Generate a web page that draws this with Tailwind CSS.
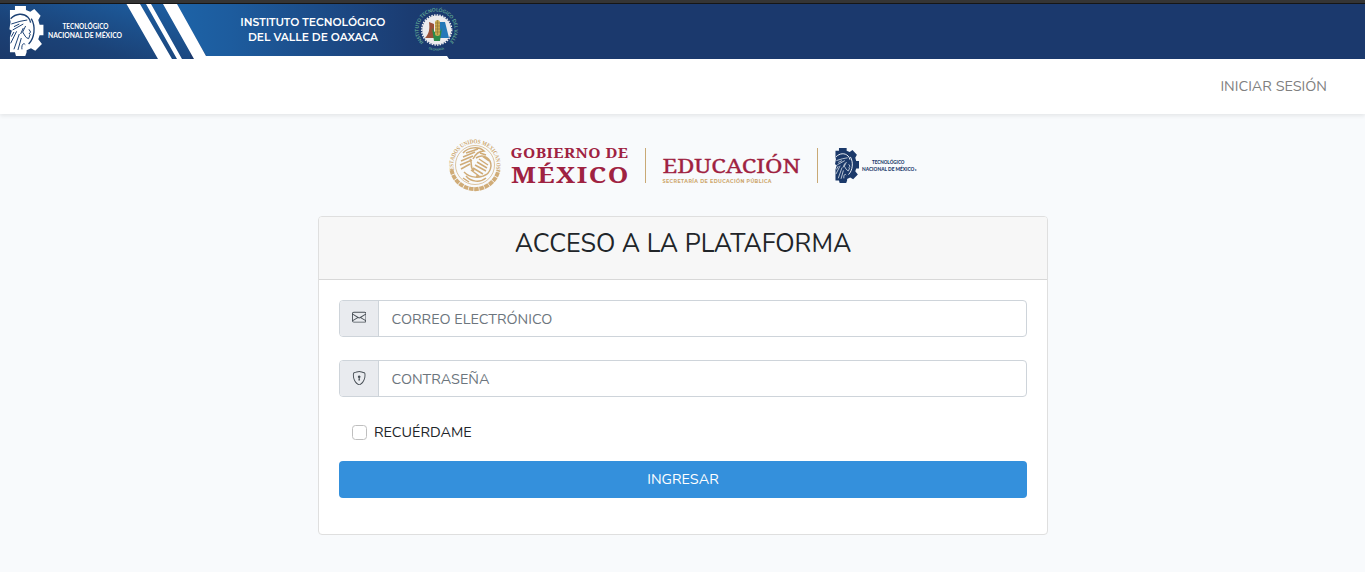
<!DOCTYPE html>
<html lang="es">
<head>
<meta charset="utf-8">
<title>Acceso a la plataforma</title>
<script src="https://cdn.jsdelivr.net/npm/@tailwindcss/browser@4"></script>
</head>
<body class="h-[572px] overflow-hidden bg-[#f8fafc] font-[Nunito,Lato,sans-serif] text-[14.4px] leading-[23px] text-[#212529]">
<svg class="hidden">
  <symbol id="gear" viewBox="0 0 103 150">
    <path fill="currentColor" d="M17 0H50V12L63 17L75 9L94 29L87 42L91 56H103V88H91L87 100L98 114L78 134L65 127L52 133V139L48 150H20L17 139H2V92C5 85 5 80 8 74L0 70L4 48L2 38V12H17Z"/>
    <g fill="none" stroke="var(--gap)" stroke-width="3">
      <path stroke-width="4" d="M4 38C20 22 42 20 56 34C60 38 63 44 64 50"/>
      <path stroke-width="4" d="M66 38C80 62 76 96 58 114"/>
      <path d="M6 54L32 46L54 42M10 72L42 54M14 62L30 54M49 60L40 78C46 86 48 96 58 98L63 84M14 130L30 84M4 112L22 76M26 132L36 96M6 92L14 78M38 130C36 118 42 108 48 116M59 70L64 78L59 84M42 66L34 84"/>
    </g>
  </symbol>
</svg>
<div class="h-[3px] bg-[#353535]"></div>
<div class="h-px bg-[#161616]"></div>
<header class="h-[55px] bg-[#1b396d]">
  <svg class="block h-[55px] w-[480px]" viewBox="0 4 480 55">
    <defs>
      <linearGradient id="bl" x1="0" y1="1" x2="1" y2="0"><stop offset="0" stop-color="#1b396a"/><stop offset=".35" stop-color="#1b4277"/><stop offset="1" stop-color="#1d61a5"/></linearGradient>
      <linearGradient id="br"><stop offset="0" stop-color="#1d63a7"/><stop offset=".2" stop-color="#1d5c9e"/><stop offset=".85" stop-color="#1b3c72"/><stop offset="1" stop-color="#1b396d"/></linearGradient>
      <path id="seal" d="M423.800 42.200A18 18 0 1 1 449.200 42.200"/>
      <path id="sealb" d="M428.500 49.100A21.200 21.200 0 0 0 444.500 49.100"/>
    </defs>
    <path fill="url(#bl)" d="M0 4H190V59H0Z"/>
    <path fill="url(#br)" d="M176 4H450V59H208Z"/>
    <path fill="#fff" d="M126.500 4H140L172 59H158ZM146 4H151L182 59H177ZM163 4H177L206 56H447L449 59H194Z"/>
    <use href="#gear" x="9.200" y="6" width="34.500" height="50" color="#fff" style="--gap:#1c4174"/>
    <g fill="#fff" font-family="Lato,sans-serif" font-weight="700" font-size="7">
      <text x="62.500" y="29.200" textLength="46" lengthAdjust="spacingAndGlyphs">TECNOLÓGICO</text>
      <text x="48" y="38.200" textLength="74" lengthAdjust="spacingAndGlyphs">NACIONAL DE MÉXICO</text>
    </g>
    <g fill="#fff" font-family="Montserrat,Lato,sans-serif" font-weight="600" font-size="11.300">
      <text x="240.300" y="26" textLength="145" lengthAdjust="spacingAndGlyphs">INSTITUTO TECNOLÓGICO</text>
      <text x="248" y="41.300" textLength="130" lengthAdjust="spacingAndGlyphs">DEL VALLE DE OAXACA</text>
    </g>
    <g font-family="Lato,sans-serif" font-weight="700" font-size="4.800" fill="#62a994">
      <text><textPath href="#seal" textLength="84">INSTITUTO TECNOLÓGICO DEL VALLE</textPath></text>
      <text font-size="3"><textPath href="#sealb" textLength="16">DE OAXACA</textPath></text>
    </g>
    <circle cx="436.700" cy="30" r="14.500" fill="#ececee"/>
    <circle cx="436.700" cy="30" r="15" fill="none" stroke="#ececee" stroke-width="1.500" stroke-dasharray="1.500 1.200"/>
    <path fill="#9a5138" d="M429 22L434 24V38H425C429 34 430 29 429 22Z"/>
    <path fill="#2379b8" d="M440 22H445L449 38H440Z"/>
    <path fill="#2c8b4a" d="M432 28C434 30 434 32 436 33H438C440 32 441 30 442 28L440 41H434Z"/>
    <rect x="435" y="20" width="5" height="16" rx="2.500" fill="#c9aa52"/>
    <path stroke="#8a7330" stroke-width=".6" d="M435 23H440M435 26H440M435 29H440M435 32H440M437.500 20V35"/>
  </svg>
</header>
<nav class="flex h-[55px] items-center justify-end bg-white pr-[38px] shadow-[0_2px_4px_rgba(0,0,0,0.08)]">
  <a class="text-[#808080]">INICIAR SESIÓN</a>
</nav>
<main class="flex flex-col items-center pt-6">
  <svg class="block h-[54px] w-[471px]" viewBox="447 138 471 54">
    <defs><path id="mx" d="M454 170A21.600 21.600 0 1 1 496 170"/></defs>
    <g fill="none" stroke="#d0ac78">
      <circle cx="475" cy="165" r="19.500" stroke-width=".7"/>
      <path stroke-width="4" stroke-dasharray="4.600 .7" d="M451.500 170A24 24 0 0 0 498.500 170"/>
      <path stroke-width="1.500" d="M463 153C468 147 479 146 484 151C479 151 475 155 473 159M466 153L478 149M463 157L475 152M461 161L473 156M460 165L472 160M461 169L470 164M476 158C484 153 491 159 491 166C490 174 484 178 476 176M479 159L488 165M477 162L487 168M475 165L486 171M473 168L483 174M471 170L479 176M464 172C470 178 480 179 487 174M466 176C471 182 480 183 486 178M470 159C473 163 469 167 474 171M482 156L489 161M463 178L469 182M480 153L486 155"/>
    </g>
    <text font-family="Liberation Serif,serif" font-weight="700" font-size="6" fill="#cda66b"><textPath href="#mx" textLength="77" lengthAdjust="spacingAndGlyphs">ESTADOS UNIDOS MEXICANOS</textPath></text>
    <g font-family="Noto Serif,DejaVu Serif,serif" fill="#9f2241">
      <text x="510.500" y="158" font-weight="700" font-size="13.800" letter-spacing=".4" textLength="118" lengthAdjust="spacingAndGlyphs">GOBIERNO DE</text>
      <text x="511" y="182.700" font-weight="700" font-size="22" letter-spacing="1.300" textLength="119" lengthAdjust="spacingAndGlyphs">MÉXICO</text>
      <text x="662.500" y="173" font-size="20.500" stroke="#9f2241" stroke-width=".3" textLength="138" lengthAdjust="spacingAndGlyphs">EDUCACIÓN</text>
    </g>
    <text x="662.500" y="182.700" font-family="Montserrat,Lato,sans-serif" font-weight="700" font-size="4.800" fill="#cda66b" textLength="109" lengthAdjust="spacing">SECRETARÍA DE EDUCACIÓN PÚBLICA</text>
    <path fill="#c9a975" d="M645 148H646V183H645ZM817 148H818V183H817Z"/>
    <use href="#gear" x="835" y="148" width="24" height="35" color="#1b396a" style="--gap:#f8fafc"/>
    <g fill="#1b396a" font-family="Lato,sans-serif" font-weight="900" font-size="5.200">
      <text x="872" y="163.900" textLength="32.500" lengthAdjust="spacingAndGlyphs">TECNOLÓGICO</text>
      <text x="862" y="170.700" textLength="52.500" lengthAdjust="spacingAndGlyphs">NACIONAL DE MÉXICO</text>
      <circle cx="915.800" cy="170" r=".7"/>
    </g>
  </svg>
  <section class="mt-6 h-[319px] w-[730px] rounded border border-[#dfdfdf] bg-white">
    <h1 class="h-[63px] rounded-t-[3px] border-b border-[#d8d8d8] bg-[#f7f7f7] pl-px pt-3 text-center text-[25.2px] leading-[31px]">ACCESO A LA PLATAFORMA</h1>
    <form class="flex flex-col px-5 pt-5">
      <div class="flex h-[37px] overflow-hidden rounded border border-[#ced4da] text-[#6c757d]">
        <span class="flex w-[39px] justify-center border-r border-[#ced4da] bg-[#e9ebef] pl-px pt-[9px] text-[#495057]">
          <svg class="size-[14.4px]" viewBox="0 0 16 16" fill="currentColor"><path d="M0 4a2 2 0 0 1 2-2h12a2 2 0 0 1 2 2v8a2 2 0 0 1-2 2H2a2 2 0 0 1-2-2V4Zm2-1a1 1 0 0 0-1 1v.217l7 4.200 7-4.200V4a1 1 0 0 0-1-1H2Zm13 2.383-4.708 2.825L15 11.105V5.383Zm-.034 6.876-5.640-3.471L8 9.583l-1.326-.795-5.640 3.470A1 1 0 0 0 2 13h12a1 1 0 0 0 .966-.741ZM1 11.105l4.708-2.897L1 5.383v5.722Z"/></svg>
        </span>
        <span class="pl-[13px] pt-[7px]">CORREO ELECTRÓNICO</span>
      </div>
      <div class="mt-[23px] flex h-[37px] overflow-hidden rounded border border-[#ced4da] text-[#6c757d]">
        <span class="flex w-[39px] justify-center border-r border-[#ced4da] bg-[#e9ebef] pl-px pt-[10px] text-[#495057]">
          <svg class="size-[14.4px]" viewBox="0 0 16 16" fill="currentColor"><path d="M5.338 1.590a61.440 61.440 0 0 0-2.837.856.481.481 0 0 0-.328.390c-.554 4.157.726 7.190 2.253 9.188a10.725 10.725 0 0 0 2.287 2.233c.346.244.652.420.893.533.120.057.218.095.293.118a.550.550 0 0 0 .101.025.615.615 0 0 0 .100-.025c.076-.023.174-.061.294-.118.240-.113.547-.290.893-.533a10.726 10.726 0 0 0 2.287-2.233c1.527-1.997 2.807-5.031 2.253-9.188a.480.480 0 0 0-.328-.390c-.651-.213-1.750-.560-2.837-.855C9.552 1.290 8.531 1.067 8 1.067c-.530 0-1.552.223-2.662.524zM5.072.560C6.157.265 7.310 0 8 0s1.843.265 2.928.560c1.110.300 2.229.655 2.887.870a1.540 1.540 0 0 1 1.044 1.262c.596 4.477-.787 7.795-2.465 9.990a11.775 11.775 0 0 1-2.517 2.453 7.159 7.159 0 0 1-1.048.625c-.280.132-.581.240-.829.240s-.548-.108-.829-.240a7.158 7.158 0 0 1-1.048-.625 11.777 11.777 0 0 1-2.517-2.453C1.928 10.487.545 7.169 1.141 2.692A1.540 1.540 0 0 1 2.185 1.430 62.456 62.456 0 0 1 5.072.560z"/><path d="M9.500 6.500a1.500 1.500 0 0 1-1 1.415l.385 1.990a.500.500 0 0 1-.491.595h-.788a.500.500 0 0 1-.490-.595l.384-1.990a1.500 1.500 0 1 1 2-1.415z"/></svg>
        </span>
        <span class="pl-[13px] pt-[7px]">CONTRASEÑA</span>
      </div>
      <label class="ml-[13px] mt-[25px] flex h-5 items-center gap-[7.4px]">
        <span class="size-[15px] rounded-[3.5px] border border-[#bfbfbf] bg-white"></span>
        <span>RECUÉRDAME</span>
      </label>
      <button type="button" class="mt-[19px] h-[37px] rounded bg-[#3490dc] pl-px text-center leading-[23px] text-white">INGRESAR</button>
    </form>
  </section>
</main>
</body>
</html>
